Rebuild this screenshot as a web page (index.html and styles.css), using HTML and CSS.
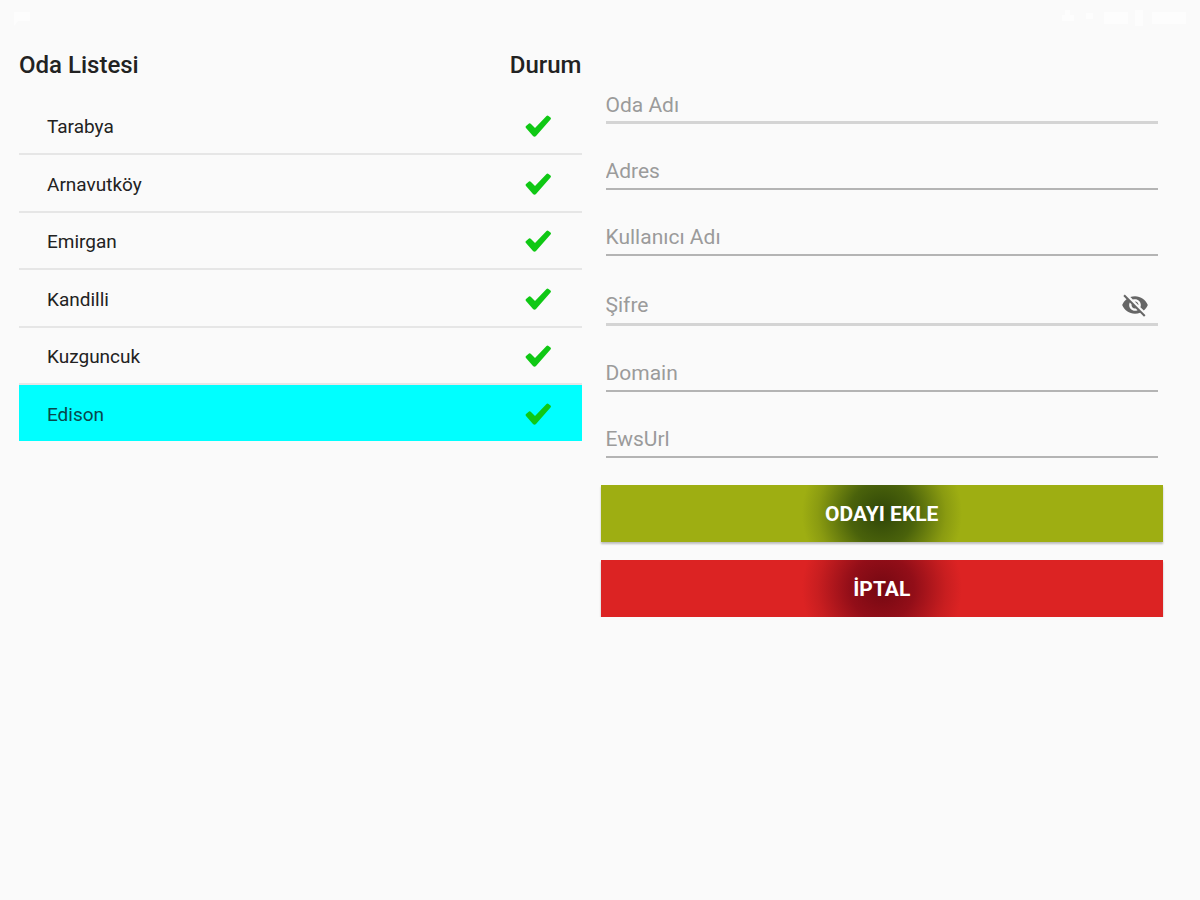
FILE: index.html
```html
<!DOCTYPE html>
<html lang="tr">
<head>
  <meta charset="UTF-8" />
  <meta name="viewport" content="width=device-width, initial-scale=1" />
  <title>Oda Listesi</title>
  <link rel="stylesheet" href="styles.css">
</head>
<body>
  <!-- Shared icons -->
  <svg class="sprite" aria-hidden="true">
    <symbol id="check" viewBox="0 0 27 23">
      <path d="M1 11L4 8.500Q5 8 6 9L10 13L21.500 1Q22.500 0 23.500 1L25.500 2.500Q26.500 3.500 25.500 4.500L11 21Q9.500 22.500 8 21L1 13Q0 12 1 11z" fill="#0fc814" />
    </symbol>
  </svg>

  <div class="status-bar" aria-hidden="true">
    <svg width="20" height="20" viewBox="0 0 20 20"><path d="M2 4h16v9H6l-4 5z" /></svg>
    <svg width="130" height="20" viewBox="0 0 130 20"><path d="M5 2h5v5h4v6H2V7h3zM26 5h7v6h-7zM44 4h24v12H44zM75 2h8v16h-8zM92 4h34v12H92z" /></svg>
  </div>

  <main class="page">
    <table class="rooms">
      <thead>
        <tr>
          <th>Oda Listesi</th>
          <th class="status">Durum</th>
        </tr>
      </thead>
      <tbody>
        <tr>
          <td>Tarabya</td>
          <td class="status"><svg class="check" role="img" aria-label="Aktif"><use href="#check" /></svg></td>
        </tr>
        <tr>
          <td>Arnavutköy</td>
          <td class="status"><svg class="check" role="img" aria-label="Aktif"><use href="#check" /></svg></td>
        </tr>
        <tr>
          <td>Emirgan</td>
          <td class="status"><svg class="check" role="img" aria-label="Aktif"><use href="#check" /></svg></td>
        </tr>
        <tr>
          <td>Kandilli</td>
          <td class="status"><svg class="check" role="img" aria-label="Aktif"><use href="#check" /></svg></td>
        </tr>
        <tr>
          <td>Kuzguncuk</td>
          <td class="status"><svg class="check" role="img" aria-label="Aktif"><use href="#check" /></svg></td>
        </tr>
        <tr class="selected">
          <td>Edison</td>
          <td class="status"><svg class="check" role="img" aria-label="Aktif"><use href="#check" /></svg></td>
        </tr>
      </tbody>
    </table>

    <form class="room-form">
      <div class="field thick">
        <input type="text" id="name" placeholder="Oda Adı" aria-label="Oda Adı" />
      </div>
      <div class="field">
        <input type="text" id="address" placeholder="Adres" aria-label="Adres" />
      </div>
      <div class="field">
        <input type="text" id="user" placeholder="Kullanıcı Adı" aria-label="Kullanıcı Adı" />
      </div>
      <div class="field thick password">
        <input type="password" id="password" placeholder="Şifre" aria-label="Şifre" />
        <button type="button" class="toggle" aria-label="Şifreyi göster">
          <svg width="28" height="28" viewBox="0 0 24 24"><path fill="#666" d="M12 7c2.760 0 5 2.240 5 5 0 .65-.13 1.260-.36 1.830l2.920 2.920c1.510-1.260 2.700-2.890 3.430-4.750-1.730-4.390-6-7.500-11-7.500-1.400 0-2.740.25-3.980.7l2.160 2.160C10.740 7.130 11.350 7 12 7zM2 4.270l2.280 2.280.46.46C3.080 8.300 1.780 10.020 1 12c1.730 4.390 6 7.500 11 7.500 1.550 0 3.030-.3 4.380-.84l.42.42L19.730 22 21 20.730 3.270 3 2 4.270zM7.530 9.800l1.550 1.550c-.05.21-.08.43-.08.65 0 1.660 1.340 3 3 3 .22 0 .44-.03.65-.08l1.550 1.550c-.67.33-1.410.53-2.200.53-2.760 0-5-2.240-5-5 0-.79.2-1.530.53-2.200zm4.310-.78l3.150 3.150.02-.16c0-1.660-1.340-3-3-3l-.17.01z" /></svg>
        </button>
      </div>
      <div class="field">
        <input type="text" id="domain" placeholder="Domain" aria-label="Domain" />
      </div>
      <div class="field">
        <input type="text" id="ewsUrl" placeholder="EwsUrl" aria-label="EwsUrl" />
      </div>
      <div class="actions">
        <button type="submit" class="btn add">ODAYI EKLE</button>
        <button type="button" class="btn cancel">İPTAL</button>
      </div>
    </form>
  </main>
</body>
</html>
```

FILE: styles.css
```css
* {
  box-sizing: border-box;
}
body {
  margin: 0;
  background-color: #fafafa;
  color: #222;
  font-family: Roboto, "Liberation Sans", sans-serif;
}
.sprite {
  display: none;
}
.status-bar {
  display: flex;
  justify-content: space-between;
  padding: 8px 10px 4px 12px;
  height: 32px;
  fill: #fdfdfd;
}
.page {
  display: grid;
  grid-template-columns: 1fr 1fr;
  align-items: start;
  gap: 19px;
  padding: 4px 37px 0 19px;
}

/* Room list */
.rooms {
  width: 100%;
  border-collapse: separate;
  border-spacing: 0;
}
.rooms th {
  height: 62px;
  padding: 0 0 5px;
  font-size: 24px;
  font-weight: 500;
  text-align: left;
}
.rooms td {
  height: 57px;
  padding: 2px 28px 0;
  border-bottom: 2px solid #e6e6e6;
  font-size: 19px;
}
.rooms tr:nth-child(even) td {
  height: 58px;
}
.rooms .status {
  width: 90px;
  text-align: right;
}
.rooms td.status {
  padding-right: 30px;
}
.rooms tr.selected td {
  height: 56px;
  border-bottom: none;
  background-color: #00ffff;
  color: #08484c;
}
.check {
  display: block;
  width: 27px;
  height: 23px;
  margin-left: auto;
}

/* Room form */
.room-form {
  padding-top: 40px;
}
.field {
  display: flex;
  align-items: center;
  margin: 0 5px 18px;
  height: 48px;
  padding-top: 12px;
  border-bottom: 2px solid #b4b4b4;
}
.field.thick {
  border-bottom: 3px solid #d4d4d4;
}
.field.password {
  height: 52px;
}
.field input {
  flex: 1;
  min-width: 0;
  padding: 0;
  border: none;
  outline: none;
  background: none;
  color: #222;
  font-family: inherit;
  font-size: 21px;
}
.field input::placeholder {
  color: #9b9b9b;
  opacity: 1;
}
.toggle {
  display: flex;
  margin-right: 9px;
  padding: 0;
  border: none;
  background: none;
  cursor: pointer;
}
.actions {
  display: grid;
  gap: 18px;
  padding-top: 9px;
}
.btn {
  height: 57px;
  border: none;
  box-shadow: 0 2px 2px rgba(0, 0, 0, 0.25);
  color: #fff;
  font-family: inherit;
  font-size: 21px;
  font-weight: 700;
  cursor: pointer;
}
.add {
  background: radial-gradient(80px 80px at center, #2f4608, #4a620b 40%, #8a9b11 80%, #9eae12) #9eae12;
}
.cancel {
  background: radial-gradient(80px 80px at center, #750812, #920e18 40%, #c81e20 80%, #dc2323) #dc2323;
}
```
